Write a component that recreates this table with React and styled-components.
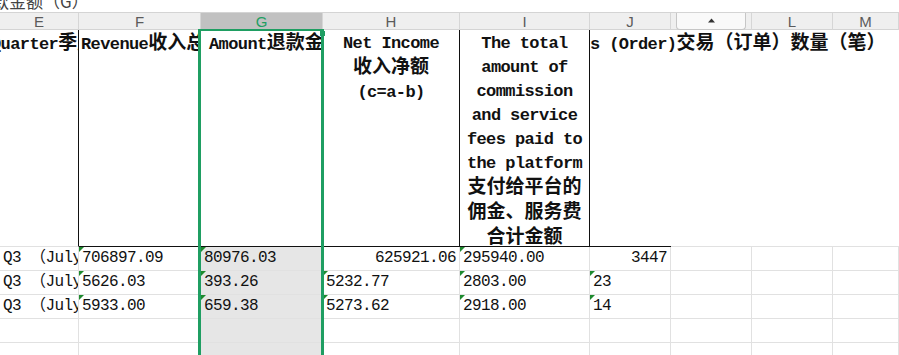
import React from 'react'
import styled, { createGlobalStyle, css } from 'styled-components'

const GRID = '79px 122px 122px 137px 130px 81px 81px 81px 1fr'
const GREEN = '#1f9e62'
const INK = '#111'
const LINE = '#e1e1e1'

const Global = createGlobalStyle`
  html, body { margin: 0; padding: 0; background: #fff; overflow: hidden; }
  body { font-family: "Liberation Mono", "Noto Sans CJK SC", monospace; color: #111; }
`

const Page = styled.div`
  width: 899px;
  height: 355px;
  overflow: hidden;
`

const FormulaStrip = styled.div`
  height: 12px;
  overflow: hidden;
  border-bottom: 1px solid #d4d4d4;
  font-family: "Noto Sans CJK SC", sans-serif;
  font-size: 17px;
  line-height: 17px;
  color: #444;
  span {
    display: block;
    margin: -8px 0 0 -8px;
    white-space: nowrap;
  }
`

const ColumnBar = styled.div`
  display: grid;
  grid-template-columns: ${GRID};
  height: 17px;
  box-sizing: border-box;
  background: #efefef;
  border-bottom: 1px solid #d4d4d4;
`

const ColHead = styled.div`
  display: flex;
  align-items: center;
  justify-content: center;
  border-right: 1px solid #d6d6d6;
  font-family: "Liberation Sans", sans-serif;
  font-size: 15px;
  color: #5b5b5b;
  ${p => p.$active && css`
    background: #c1c1c1;
    color: ${GREEN};
  `}
`

const Tab = styled.div`
  width: 70px;
  height: 17px;
  margin-top: -1px;
  box-sizing: border-box;
  display: flex;
  align-items: center;
  justify-content: center;
  background: #f9f9f9;
  border: 1px solid #c6c6c6;
  border-top: none;
  border-radius: 0 0 4px 4px;
`

const Sheet = styled.div`
  position: relative;
  display: grid;
  grid-template-columns: ${GRID};
  grid-template-rows: 217px;
  grid-auto-rows: 24px;
`

const Cell = styled.div`
  position: relative;
  box-sizing: border-box;
  border-right: 1px solid ${LINE};
  border-bottom: 1px solid ${LINE};
  padding: 0 3px;
  font-size: 16px;
  letter-spacing: -0.6px;
  line-height: 23px;
  white-space: nowrap;
  overflow: hidden;
  text-align: ${p => (p.$right ? 'right' : 'left')};
  background: ${p => (p.$shade ? '#e6e6e6' : 'transparent')};
  ${p => p.$mark && css`
    &::before {
      content: '';
      position: absolute;
      top: 0;
      left: 0;
      border-top: 5px solid #1e8a2e;
      border-right: 5px solid transparent;
    }
  `}
`

const TitleCell = styled(Cell)`
  font-size: 17px;
  font-weight: 700;
  line-height: 24px;
  padding-top: 2px;
  text-align: ${p => (p.$center ? 'center' : 'left')};
  border-bottom-color: ${p => (p.$ink ? INK : LINE)};
  border-right: ${p => (p.$edge === 'ink' ? `1px solid ${INK}` : p.$edge === 'none' ? 'none' : `1px solid ${LINE}`)};
  text-indent: ${p => p.$indent || 0}px;
  ${p => p.$center && css`
    overflow: visible;
  `}
  ${p => p.$spill && css`
    overflow: visible;
    clip-path: inset(0 -400px 0 0);
  `}
`

const Line = styled.div`
  white-space: nowrap;
`

const Han = styled.span`
  font-size: 19px;
  letter-spacing: 0;
`

const Selection = styled.div`
  position: absolute;
  top: -1px;
  left: 198px;
  width: 126px;
  bottom: -10px;
  box-sizing: border-box;
  border: 3px solid ${GREEN};
  border-top-width: 2px;
  pointer-events: none;
  &::after {
    content: '';
    position: absolute;
    top: 0;
    right: -4px;
    width: 5px;
    height: 5px;
    background: ${GREEN};
  }
`

const mix = text =>
  text
    .split(/([\u3000-\u303f\u4e00-\u9fff\uff00-\uffef]+)/)
    .map((part, i) => (i % 2 ? <Han key={i}>{part}</Han> : part))

const letters = ['E', 'F', 'G', 'H', 'I', 'J', 'K', 'L', 'M']

const netIncome = ['Net Income', '收入净额', '(c=a-b)']
const commission = [
  'The total',
  'amount of',
  'commission',
  'and service',
  'fees paid to',
  'the platform',
  '支付给平台的',
  '佣金、服务费',
  '合计金额',
]

const rows = [
  [
    { v: 'Q3 （July' },
    { v: '706897.09', m: 1 },
    { v: '80976.03', m: 1 },
    { v: '625921.06', r: 1 },
    { v: '295940.00', m: 1 },
    { v: '3447', r: 1 },
  ],
  [
    { v: 'Q3 （July' },
    { v: '5626.03', m: 1 },
    { v: '393.26', m: 1 },
    { v: '5232.77', m: 1 },
    { v: '2803.00', m: 1 },
    { v: '23', m: 1 },
  ],
  [
    { v: 'Q3 （July' },
    { v: '5933.00', m: 1 },
    { v: '659.38', m: 1 },
    { v: '5273.62', m: 1 },
    { v: '2918.00', m: 1 },
    { v: '14', m: 1 },
  ],
  [],
  [],
]

function Caret() {
  return (
    <svg width="7" height="5" viewBox="0 0 7 5">
      <polygon points="0,4.5 3.5,0.5 7,4.5" fill="#333" />
    </svg>
  )
}

export default function App() {
  return (
    <Page>
      <Global />
      <FormulaStrip>
        <span>款金额（G）</span>
      </FormulaStrip>

      <ColumnBar>
        {letters.map(l => (
          <ColHead key={l} $active={l === 'G'}>
            {l === 'K' ? (
              <Tab>
                <Caret />
              </Tab>
            ) : (
              l
            )}
          </ColHead>
        ))}
      </ColumnBar>

      <Sheet>
        <TitleCell $edge="ink" $indent={-12}>
          {mix('Quarter季度')}
        </TitleCell>
        <TitleCell $ink style={{ paddingLeft: 2 }}>
          {mix('Revenue收入总额')}
        </TitleCell>
        <TitleCell $ink style={{ paddingLeft: 8 }}>
          {mix('Amount退款金额')}
        </TitleCell>
        <TitleCell $ink $edge="ink" $center>
          {netIncome.map(t => (
            <Line key={t}>{mix(t)}</Line>
          ))}
        </TitleCell>
        <TitleCell $ink $edge="ink" $center>
          {commission.map(t => (
            <Line key={t}>{mix(t)}</Line>
          ))}
        </TitleCell>
        <TitleCell $ink $edge="none" $spill $indent={-3}>
          {mix('s (Order)交易（订单）数量（笔）')}
        </TitleCell>
        <TitleCell $edge="none" />
        <TitleCell $edge="none" />
        <TitleCell $edge="none" />

        {rows.map((row, ri) =>
          letters.map((l, ci) => {
            const c = row[ci] || {}
            return (
              <Cell key={`${ri}-${l}`} $right={c.r} $mark={c.m} $shade={ci === 2}>
                {c.v}
              </Cell>
            )
          })
        )}

        <Selection />
      </Sheet>
    </Page>
  )
}
